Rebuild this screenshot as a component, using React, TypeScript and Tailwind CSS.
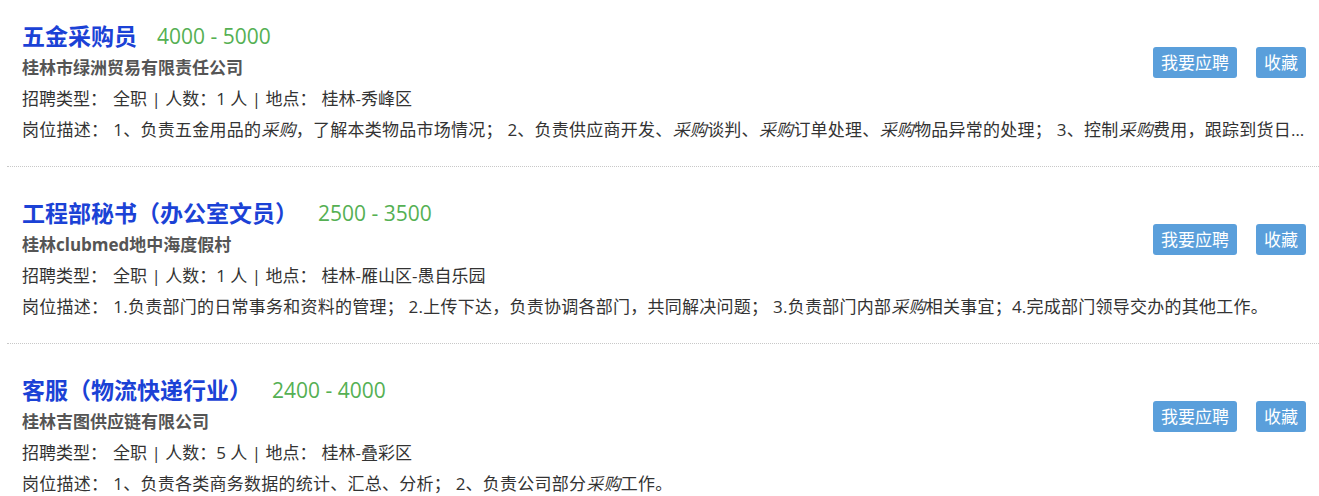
import React from "react";

type Job = {
  title: string;
  salary: string;
  company: string;
  count: string;
  place: string;
  desc: React.ReactNode;
};

const E = ({ children }: { children: React.ReactNode }) => <em className="italic">{children}</em>;

const jobs: Job[] = [
  {
    title: "五金采购员",
    salary: "4000 - 5000",
    company: "桂林市绿洲贸易有限责任公司",
    count: "1",
    place: "桂林-秀峰区",
    desc: (
      <>
        1、负责五金用品的<E>采购</E>，了解本类物品市场情况； 2、负责供应商开发、<E>采购</E>谈判、<E>采购</E>订单处理、<E>采购</E>物品异常的处理； 3、控制<E>采购</E>费用，跟踪到货日期，确保物品按时到达； 4、完成上级交办的其他工作。
      </>
    ),
  },
  {
    title: "工程部秘书（办公室文员）",
    salary: "2500 - 3500",
    company: "桂林clubmed地中海度假村",
    count: "1",
    place: "桂林-雁山区-愚自乐园",
    desc: (
      <>
        1.负责部门的日常事务和资料的管理； 2.上传下达，负责协调各部门，共同解决问题； 3.负责部门内部<E>采购</E>相关事宜；4.完成部门领导交办的其他工作。
      </>
    ),
  },
  {
    title: "客服（物流快递行业）",
    salary: "2400 - 4000",
    company: "桂林吉图供应链有限公司",
    count: "5",
    place: "桂林-叠彩区",
    desc: (
      <>
        1、负责各类商务数据的统计、汇总、分析； 2、负责公司部分<E>采购</E>工作。
      </>
    ),
  },
];

export default function App() {
  return (
    <div
      className="w-[1319px] h-[496px] overflow-hidden bg-white text-[#333]"
      style={{ fontFamily: '"Open Sans", "Noto Sans CJK SC", sans-serif' }}
    >
      <div className="mt-[-10px]">
        {jobs.map((j, i) => (
          <div
            key={i}
            className="ml-[7px] pl-[15px] pr-[13px] pt-[30px] pb-[21px] border-b border-dotted border-[#c8c8c8]"
          >
            <div className="flex items-start">
              <div className="flex-1 min-w-0">
                <div className="flex items-center h-[32px]">
                  <span className="text-[23px] font-bold text-[#1b42d6] leading-[32px]">{j.title}</span>
                  <span className="ml-[20px] text-[21px] text-[#55b053] leading-[32px]">{j.salary}</span>
                </div>
                <div className="text-[17px] font-bold text-[#555] leading-[31px] h-[31px]">{j.company}</div>
                <div className="text-[17px] leading-[31px] h-[31px] whitespace-nowrap">
                  招聘类型：<span className="ml-[6px]">全职 | 人数：{j.count} 人 | 地点：</span>
                  <span className="ml-[5px]">{j.place}</span>
                </div>
              </div>
              <div className="flex gap-[19px] mt-[27px] shrink-0">
                <button className="h-[31px] px-[8px] rounded-[3px] bg-[#5a9fdb] text-white text-[17px] leading-[31px]">
                  我要应聘
                </button>
                <button className="h-[31px] px-[8px] rounded-[3px] bg-[#5a9fdb] text-white text-[17px] leading-[31px]">
                  收藏
                </button>
              </div>
            </div>
            <div className="text-[17px] tracking-[0.25px] leading-[31px] h-[31px] whitespace-nowrap overflow-hidden text-ellipsis">
              岗位描述：<span className="ml-[5px]">{j.desc}</span>
            </div>
          </div>
        ))}
      </div>
    </div>
  );
}
